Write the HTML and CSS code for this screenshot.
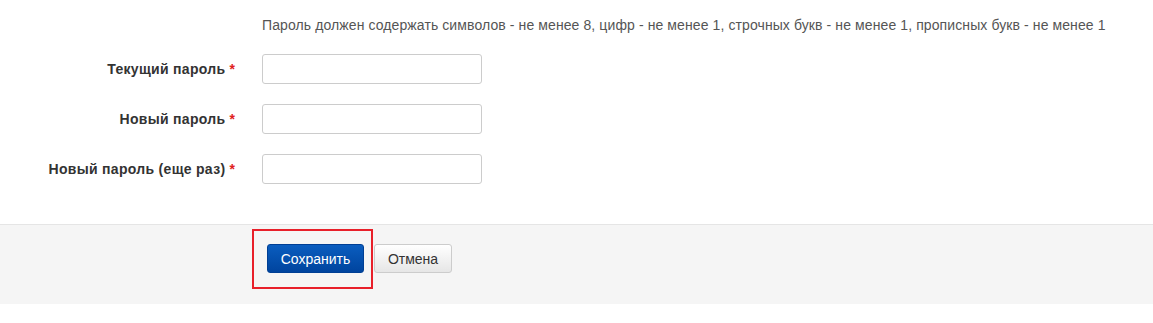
FILE: index.html
```html
<!DOCTYPE html>
<html lang="ru">
<head>
    <meta charset="UTF-8">
    <title>Смена пароля</title>
    <link rel="stylesheet" href="styles.css">
</head>
<body>
    <form class="password-form">
        <div class="form-body">
            <div class="form-row hint-row">
                <div class="form-label"></div>
                <div class="hint">Пароль должен содержать символов - не менее 8, цифр - не менее 1, строчных букв - не менее 1, прописных букв - не менее 1</div>
            </div>

            <div class="form-row">
                <label class="form-label" for="currentPassword">Текущий пароль <span class="required">*</span></label>
                <input type="password" id="currentPassword" class="form-input">
            </div>

            <div class="form-row">
                <label class="form-label" for="newPassword">Новый пароль <span class="required">*</span></label>
                <input type="password" id="newPassword" class="form-input">
            </div>

            <div class="form-row">
                <label class="form-label" for="newPasswordAgain">Новый пароль (еще раз) <span class="required">*</span></label>
                <input type="password" id="newPasswordAgain" class="form-input">
            </div>
        </div>

        <div class="form-actions">
            <div class="highlight">
                <button type="submit" class="btn btn-primary">Сохранить</button>
            </div>
            <button type="button" class="btn btn-default">Отмена</button>
        </div>
    </form>
</body>
</html>
```

FILE: styles.css
```css
body {
    font-family: "Liberation Sans", Arial, sans-serif;
    font-size: 14px;
    color: #333;
    background-color: #fff;
    margin: 0;
}

.form-body {
    padding-top: 16px;
    padding-bottom: 20px;
}

.form-row {
    display: flex;
    align-items: center;
    gap: 27px;
    margin-bottom: 20px;
}

.form-label {
    width: 235px;
    flex-shrink: 0;
    text-align: right;
    font-weight: bold;
    letter-spacing: 0.3px;
    color: #333;
}

.required {
    color: #e02020;
    letter-spacing: 0;
}

.hint {
    color: #555;
    line-height: 18px;
    letter-spacing: 0.1px;
    white-space: nowrap;
}

.form-input {
    width: 220px;
    height: 30px;
    box-sizing: border-box;
    border: 1px solid #ccc;
    border-radius: 3px;
    padding: 4px 6px;
    font-size: 14px;
    margin: 0;
}

.form-actions {
    display: flex;
    align-items: flex-start;
    background-color: #f5f5f5;
    border-top: 1px solid #e5e5e5;
    padding: 4px 0 15px 252px;
}

.highlight {
    border: 2px solid #e8202a;
    padding: 13px 7px 14px 13px;
}

.btn {
    font-family: "Liberation Sans", Arial, sans-serif;
    font-size: 14px;
    height: 29px;
    padding: 0;
    box-sizing: border-box;
    border-radius: 3px;
    cursor: pointer;
    margin: 0;
}

.btn-primary {
    width: 97px;
    color: #fff;
    border: 1px solid #003f94;
    background: linear-gradient(#0a5dbf, #00449e);
}

.btn-default {
    width: 78px;
    margin-top: 15px;
    margin-left: 1px;
    color: #333;
    border: 1px solid #ccc;
    background: linear-gradient(#fff, #e6e6e6);
}
```
